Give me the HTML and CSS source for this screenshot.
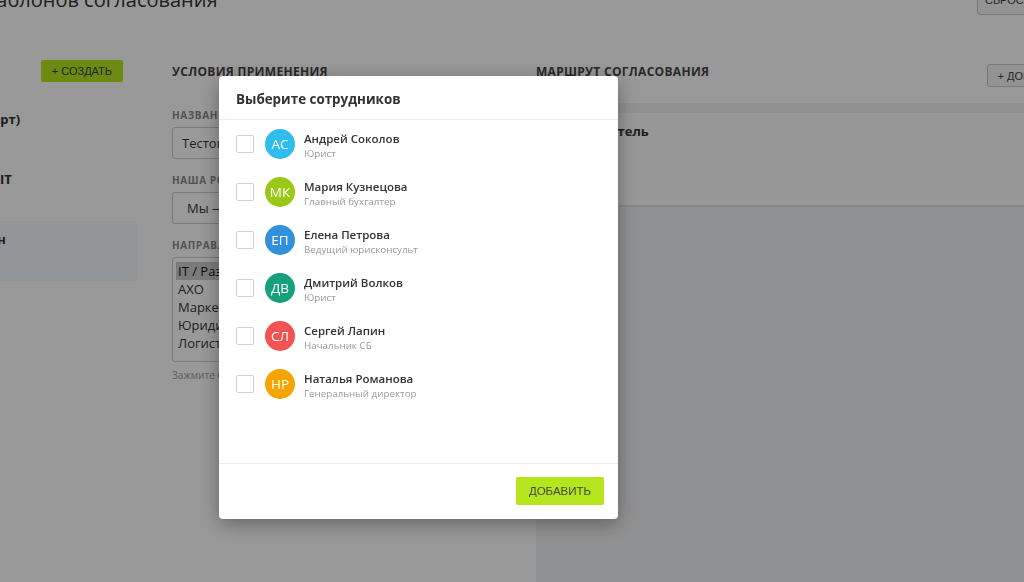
FILE: index.html
```html
<!DOCTYPE html>
<html lang="ru">
<head>
  <meta charset="UTF-8">
  <title>Настройка шаблонов согласования</title>
  <link rel="stylesheet" href="styles.css">
</head>
<body>
  <div class="page">
    <div class="page-head">
      <h1>Настройка шаблонов согласования</h1>
      <button class="btn-light btn-reset">Сбросить фильтры</button>
    </div>

    <div class="columns">
      <!-- список шаблонов -->
      <div class="sidebar">
        <div class="col-head">
          <span class="col-title">Шаблоны</span>
          <button class="btn-green">+ Создать</button>
        </div>
        <ul class="tpl-list">
          <li class="tpl"><b>Договор (стандарт)</b><span>4 этапа</span></li>
          <li class="tpl"><b>Закупка ПО для IT</b><span>3 этапа</span></li>
          <li class="tpl active"><b>Рекламный план</b><span>2 этапа</span></li>
        </ul>
      </div>

      <!-- условия -->
      <div class="conditions">
        <div class="col-head">
          <span class="col-title">Условия применения</span>
        </div>
        <label class="field-label">Название</label>
        <input class="field" type="text" value="Тестовый шаблон">
        <label class="field-label">Наша роль</label>
        <select class="field">
          <option>Мы — заказчик</option>
        </select>
        <label class="field-label">Направления</label>
        <select class="field listbox" multiple size="5">
          <option selected>IT / Разработка</option>
          <option>АХО</option>
          <option>Маркетинг</option>
          <option>Юридический отдел</option>
          <option>Логистика</option>
        </select>
        <div class="hint">Зажмите Ctrl, чтобы выбрать несколько</div>
      </div>

      <!-- маршрут -->
      <div class="route">
        <div class="col-head">
          <span class="col-title">Маршрут согласования</span>
          <button class="btn-light btn-add">+ Добавить этап</button>
        </div>
        <div class="route-body">
          <div class="stage">
            <div class="stage-title">Согласователь</div>
          </div>
        </div>
      </div>
    </div>
  </div>

  <div class="overlay">
    <div class="modal">
      <div class="modal-head">Выберите сотрудников</div>
      <div class="modal-body">
        <label class="person">
          <span class="check"></span>
          <span class="avatar" style="background:#2fbdf0">АС</span>
          <span class="person-info"><b>Андрей Соколов</b><small>Юрист</small></span>
        </label>
        <label class="person">
          <span class="check"></span>
          <span class="avatar" style="background:#9bc816">МК</span>
          <span class="person-info"><b>Мария Кузнецова</b><small>Главный бухгалтер</small></span>
        </label>
        <label class="person">
          <span class="check"></span>
          <span class="avatar" style="background:#3490dc">ЕП</span>
          <span class="person-info"><b>Елена Петрова</b><small>Ведущий юрисконсульт</small></span>
        </label>
        <label class="person">
          <span class="check"></span>
          <span class="avatar" style="background:#17a07c">ДВ</span>
          <span class="person-info"><b>Дмитрий Волков</b><small>Юрист</small></span>
        </label>
        <label class="person">
          <span class="check"></span>
          <span class="avatar" style="background:#f25454">СЛ</span>
          <span class="person-info"><b>Сергей Лапин</b><small>Начальник СБ</small></span>
        </label>
        <label class="person">
          <span class="check"></span>
          <span class="avatar" style="background:#f5a500">НР</span>
          <span class="person-info"><b>Наталья Романова</b><small>Генеральный директор</small></span>
        </label>
      </div>
      <div class="modal-foot">
        <button class="btn-green btn-submit">Добавить</button>
      </div>
    </div>
  </div>
</body>
</html>
```

FILE: styles.css
```css
html, body {
  overflow: hidden;
}
body {
  margin: 0;
  background: #fff;
  font-family: 'Open Sans', 'Liberation Sans', sans-serif;
  color: #333;
}
/* страница прокручена: левый и верхний края обрезаны */
.page {
  width: 1280px;
  margin: -20px 0 0 -150px;
  padding: 0 20px;
  box-sizing: border-box;
}
.page-head {
  height: 40px;
  display: flex;
  align-items: center;
  justify-content: space-between;
}
h1 {
  margin: 0;
  font-size: 20px;
  line-height: 30px;
  font-weight: 400;
  color: #333;
}
button {
  font-family: 'Liberation Sans', Arial, sans-serif;
  text-transform: uppercase;
  cursor: pointer;
}
.btn-light {
  height: 30px;
  padding: 0 12px;
  font-size: 11px;
  color: #444;
  background: #f5f5f5;
  border: 1px solid #c8c8c8;
  border-radius: 3px;
}
.btn-reset {
  padding: 0 7px;
}
.btn-green {
  height: 22px;
  padding: 0 11px;
  font-size: 11px;
  color: #3a3a3a;
  background: #b5e61d;
  border: none;
  border-radius: 2px;
}
.columns {
  display: flex;
  gap: 35px;
  padding-top: 40px;
}
.col-head {
  display: flex;
  align-items: flex-start;
  justify-content: space-between;
}
.col-title {
  font-size: 12px;
  line-height: 23px;
  font-weight: 700;
  text-transform: uppercase;
  letter-spacing: 0.3px;
  color: #444;
}

/* шаблоны */
.sidebar {
  width: 267px;
  flex: none;
}
.sidebar .col-head {
  padding: 0 14px;
}
.tpl-list {
  list-style: none;
  margin: 18px 0 0;
  padding: 0;
}
.tpl {
  height: 60px;
  box-sizing: border-box;
  padding: 9px 14px 0 19px;
}
.tpl b {
  display: block;
  font-size: 13px;
  line-height: 18px;
  color: #333;
}
.tpl span {
  display: block;
  font-size: 11px;
  line-height: 16px;
  color: #999;
}
.tpl.active {
  background: #f6fbff;
}

/* условия */
.conditions {
  width: 329px;
  flex: none;
  display: flex;
  flex-direction: column;
}
.field-label {
  margin: 14px 0 5px;
  font-size: 10px;
  line-height: 14px;
  font-weight: 700;
  text-transform: uppercase;
  letter-spacing: 0.6px;
  color: #888;
}
.conditions .col-head + .field-label {
  margin-top: 25px;
}
.field {
  height: 32px;
  box-sizing: border-box;
  padding: 0 9px;
  font-family: inherit;
  font-size: 13px;
  color: #333;
  background: #fff;
  border: 1px solid #ccc;
  border-radius: 3px;
}
select.field {
  padding-left: 10px;
}
select.listbox {
  height: 105px;
  padding: 4px 3px;
  overflow: hidden;
}
.listbox option {
  padding: 0 2px;
}
.hint {
  margin-top: 6px;
  font-size: 10px;
  line-height: 14px;
  color: #999;
}

/* маршрут */
.route {
  flex: 1;
}
.btn-add {
  height: 23px;
  margin-top: 4px;
  padding: 0 10px;
}
.route-body {
  margin-top: 16px;
  padding-top: 10px;
  min-height: 520px;
  background: #f1f2f4;
}
.stage {
  height: 94px;
  box-sizing: border-box;
  padding: 9px 12px;
  background: #fdfdfd;
  border-bottom: 2px solid #e2e3e5;
}
.stage-title {
  font-size: 13px;
  line-height: 18px;
  font-weight: 700;
  color: #333;
}

/* модальное окно */
.overlay {
  position: fixed;
  inset: 0;
  background: rgba(0, 0, 0, 0.4);
  display: flex;
  align-items: flex-start;
  padding: 76px 0 0 219px;
}
.modal {
  width: 399px;
  background: #fff;
  border-radius: 4px;
  box-shadow: 0 5px 20px rgba(0, 0, 0, 0.35);
}
.modal-head {
  padding: 14px 17px 11px;
  font-size: 13.4px;
  line-height: 18px;
  font-weight: 700;
  color: #333;
  border-bottom: 1px solid #ececec;
}
.modal-body {
  height: 343px;
}
.person {
  height: 48px;
  display: flex;
  align-items: center;
  padding: 0 17px;
}
.check {
  width: 18px;
  height: 18px;
  box-sizing: border-box;
  border: 1px solid #d0d0d0;
  border-radius: 2px;
  margin-right: 11px;
}
.avatar {
  width: 30px;
  height: 30px;
  border-radius: 50%;
  display: flex;
  align-items: center;
  justify-content: center;
  color: #fff;
  font-size: 13.5px;
  margin-right: 9px;
}
.person-info {
  margin-top: 4px;
}
.person-info b {
  display: block;
  font-size: 11.5px;
  line-height: 16px;
  font-weight: 600;
  color: #333;
}
.person-info small {
  display: block;
  font-size: 9.8px;
  line-height: 14px;
  color: #9a9a9a;
}
.modal-foot {
  display: flex;
  justify-content: flex-end;
  padding: 13px 14px 14px;
  border-top: 1px solid #ececec;
}
.btn-submit {
  width: 88px;
  height: 28px;
  font-size: 11.5px;
  color: #444;
}
```
